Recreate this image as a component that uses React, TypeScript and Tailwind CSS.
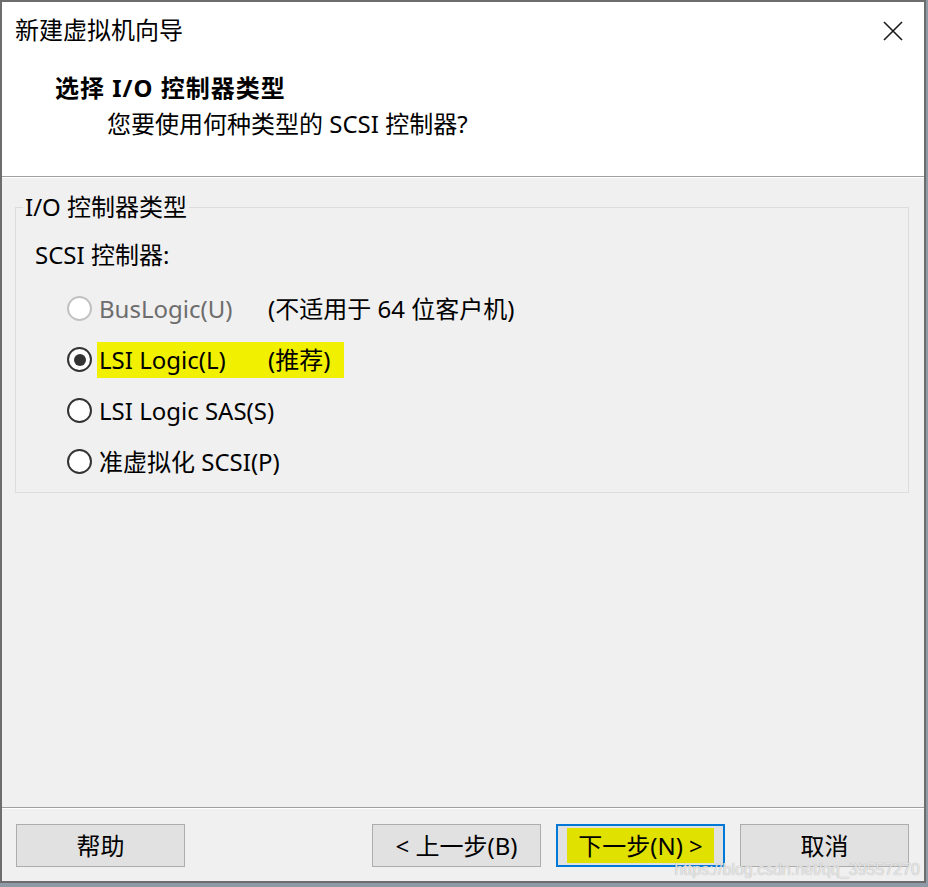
import React from "react";

const font = "font-['Noto_Sans','Noto_Sans_CJK_SC',sans-serif]";

interface Option {
  label: string;
  note?: string;
  checked?: boolean;
  disabled?: boolean;
  highlight?: boolean;
}

const options: Option[] = [
  { label: "BusLogic(U)", note: "(不适用于 64 位客户机)", disabled: true },
  { label: "LSI Logic(L)", note: "(推荐)", checked: true, highlight: true },
  { label: "LSI Logic SAS(S)" },
  { label: "准虚拟化 SCSI(P)" },
];

function Radio({ checked, disabled }: { checked?: boolean; disabled?: boolean }) {
  return (
    <span
      className={`flex h-[25px] w-[25px] shrink-0 items-center justify-center rounded-full border-2 bg-white ${
        disabled ? "border-[#c2c2c2]" : "border-[#333333]"
      }`}
    >
      {checked && <span className="h-[12px] w-[12px] rounded-full bg-[#333333]" />}
    </span>
  );
}

function OptionRow({ opt }: { opt: Option }) {
  const text = (
    <>
      <span
        className={`shrink-0 whitespace-nowrap ${opt.note ? "w-[169px]" : ""} ${
          opt.disabled ? "text-[#6d6d6d]" : "text-black"
        }`}
      >
        {opt.label}
      </span>
      {opt.note && <span className="whitespace-nowrap text-black">{opt.note}</span>}
    </>
  );
  return (
    <div className="flex h-[51px] items-center">
      <Radio checked={opt.checked} disabled={opt.disabled} />
      {opt.highlight ? (
        <div className="ml-[5px] flex h-[36px] items-center bg-[#f0f000] pl-[2px] pr-[14px]">{text}</div>
      ) : (
        <div className="ml-[7px] flex items-center">{text}</div>
      )}
    </div>
  );
}

function Button({ children, primary }: { children: React.ReactNode; primary?: boolean }) {
  return (
    <button
      className={`flex h-[43px] w-[169px] items-center justify-center bg-[#e1e1e1] text-[24px] leading-8 text-black ${
        primary ? "border-2 border-[#0078d7]" : "border border-[#adadad]"
      }`}
    >
      {primary ? (
        <span className="flex h-[35px] w-[147px] items-center justify-center bg-[#e1e100]">{children}</span>
      ) : (
        children
      )}
    </button>
  );
}

export default function App() {
  return (
    <div className={`h-[887px] w-[928px] bg-[#8e9aa6] ${font}`}>
      <div className="relative flex h-[883px] w-[926px] flex-col border-2 border-[#6d6d6d] bg-[#f0f0f0]">
        {/* header */}
        <div className="h-[174px] bg-white pt-[12px]">
          <div className="flex items-center justify-between pl-[13px] pr-[20px]">
            <h1 className="text-[24px] leading-8 text-black">新建虚拟机向导</h1>
            <svg width="22" height="22" viewBox="0 0 22 22" className="mt-[1px]">
              <path d="M2 2 L20 20 M20 2 L2 20" stroke="#1a1a1a" strokeWidth="1.6" fill="none" />
            </svg>
          </div>
          <div className="mt-[26px] pl-[53px] text-[24px] font-bold leading-8 tracking-[1px] text-black">
            选择 I/O 控制器类型
          </div>
          <div className="mt-[4px] pl-[105px] text-[24px] leading-8 text-black">您要使用何种类型的 SCSI 控制器?</div>
        </div>
        <div className="h-px bg-[#a0a0a0]" />
        <div className="h-px bg-white" />

        {/* body */}
        <div className="flex-1 pl-[13px] pt-[29px] text-[24px] leading-8">
          <div className="relative h-[286px] w-[894px] border border-[#dcdcdc]">
            <span className="absolute -top-[17px] left-[7px] bg-[#f0f0f0] px-[2px] text-black">I/O 控制器类型</span>
            <div className="pl-[19px] pt-[31px] text-black">SCSI 控制器:</div>
            <div className="mt-[12px] pl-[51px]">
              {options.map((opt) => (
                <OptionRow key={opt.label} opt={opt} />
              ))}
            </div>
          </div>
        </div>

        {/* footer */}
        <div className="h-px bg-[#a0a0a0]" />
        <div className="h-px bg-white" />
        <div className="flex h-[72px] items-start pl-[14px] pr-[15px] pt-[15px]">
          <Button>帮助</Button>
          <div className="ml-auto flex gap-[15px]">
            <Button>&lt; 上一步(B)</Button>
            <Button primary>下一步(N) &gt;</Button>
            <Button>取消</Button>
          </div>
        </div>

        <span className="pointer-events-none absolute bottom-[3px] right-[4px] font-['Liberation_Sans',sans-serif] text-[16px] leading-4 text-white/70 [text-shadow:0_0_1px_#9a9a9a]">
          https://blog.csdn.net/qq_39557270
        </span>
      </div>
    </div>
  );
}
